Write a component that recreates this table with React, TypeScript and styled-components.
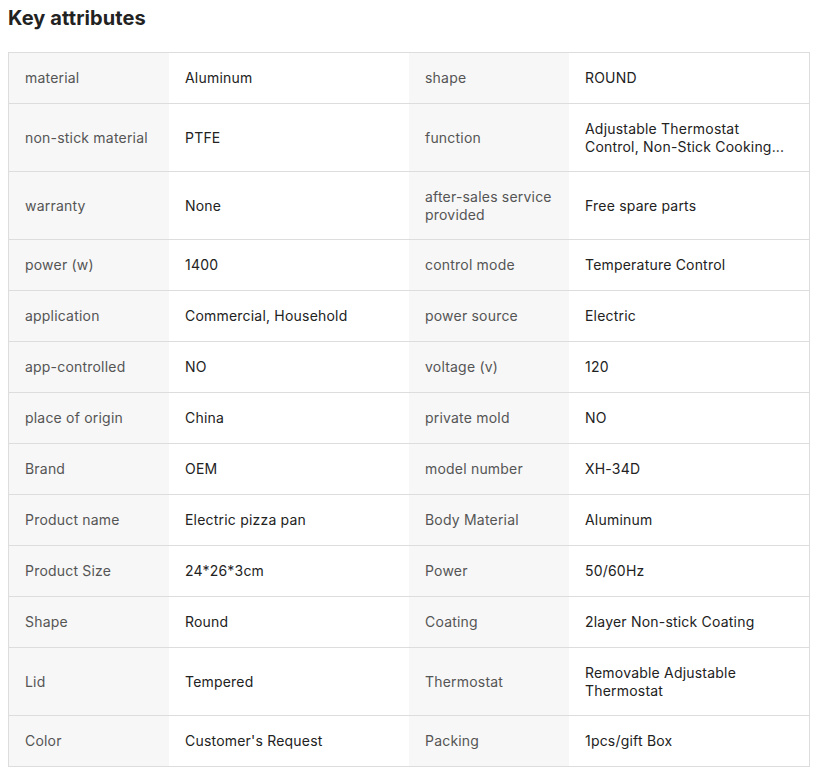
import React from "react";
import styled, { createGlobalStyle } from "styled-components";

const Global = createGlobalStyle`
  body {
    margin: 8px;
    background: #ffffff;
    font-family: Inter, "Noto Sans", sans-serif;
    color: #222222;
  }
`;

const Title = styled.h3`
  margin: 0 0 24px 0;
  font-size: 20px;
  line-height: 20px;
  font-weight: 700;
  letter-spacing: 0.1px;
  color: #222222;
`;

const Table = styled.div`
  display: grid;
  grid-template-columns: 160px 240px 160px 240px;
  width: 800px;
  border: 1px solid #dddddd;
  border-bottom: none;
`;

const Cell = styled.div<{ $label?: boolean }>`
  display: flex;
  align-items: center;
  min-height: 51px;
  box-sizing: border-box;
  padding: 16px;
  font-size: 14px;
  line-height: 17.5px;
  letter-spacing: 0.2px;
  background: ${(p) => (p.$label ? "#f7f7f7" : "#ffffff")};
  color: ${(p) => (p.$label ? "#555555" : "#222222")};
  border-bottom: 1px solid #dddddd;
`;

const Text = styled.span<{ $narrow?: boolean }>`
  display: block;
  max-width: ${(p) => (p.$narrow ? "206px" : "none")};
`;

const rows: [string, string, string, string, boolean?][] = [
  ["material", "Aluminum", "shape", "ROUND"],
  ["non-stick material", "PTFE", "function", "Adjustable Thermostat Control, Non-Stick Cooking...", true],
  ["warranty", "None", "after-sales service provided", "Free spare parts"],
  ["power (w)", "1400", "control mode", "Temperature Control"],
  ["application", "Commercial, Household", "power source", "Electric"],
  ["app-controlled", "NO", "voltage (v)", "120"],
  ["place of origin", "China", "private mold", "NO"],
  ["Brand", "OEM", "model number", "XH-34D"],
  ["Product name", "Electric pizza pan", "Body Material", "Aluminum"],
  ["Product Size", "24*26*3cm", "Power", "50/60Hz"],
  ["Shape", "Round", "Coating", "2layer Non-stick Coating"],
  ["Lid", "Tempered", "Thermostat", "Removable Adjustable Thermostat"],
  ["Color", "Customer's Request", "Packing", "1pcs/gift Box"],
];

export default function App() {
  return (
    <>
      <Global />
      <Title>Key attributes</Title>
      <Table>
        {rows.map((r, i) => (
          <React.Fragment key={i}>
            <Cell $label>
              <Text>{r[0]}</Text>
            </Cell>
            <Cell>
              <Text>{r[1]}</Text>
            </Cell>
            <Cell $label>
              <Text>{r[2]}</Text>
            </Cell>
            <Cell>
              <Text $narrow={r[4]}>{r[3]}</Text>
            </Cell>
          </React.Fragment>
        ))}
      </Table>
    </>
  );
}
